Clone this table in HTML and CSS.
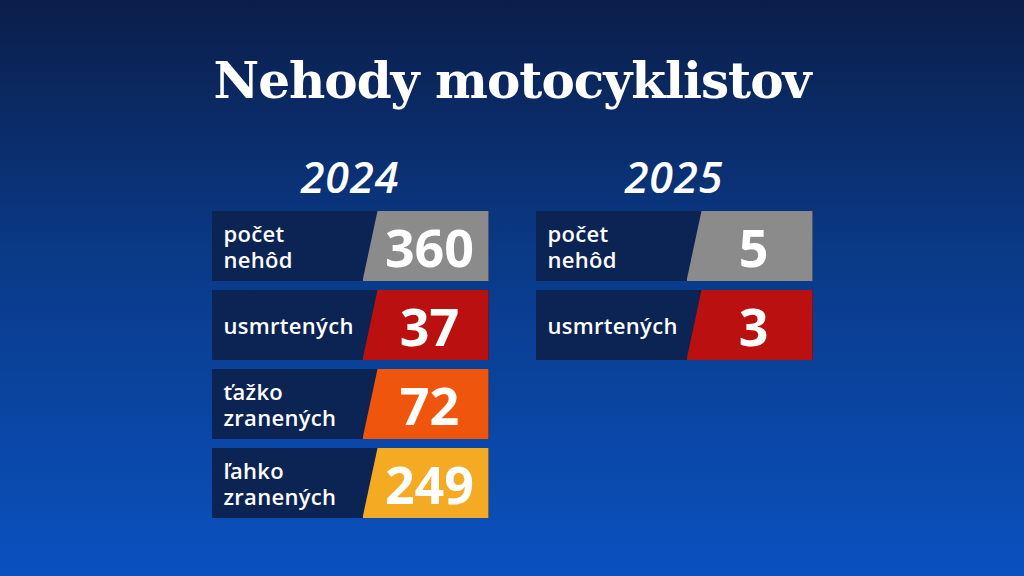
FILE: index.html
```html
<!DOCTYPE html>
<html lang="sk">
<head>
<meta charset="utf-8">
<title>Nehody motocyklistov</title>
<link rel="stylesheet" href="styles.css">
</head>
<body>
<main class="screen">
  <h1 class="title">Nehody motocyklistov</h1>
  <div class="columns">
    <section class="col">
      <h2 class="year">2024</h2>
      <div class="row">
        <div class="label">počet<br>nehôd</div>
        <div class="value gray">360</div>
      </div>
      <div class="row">
        <div class="label">usmrtených</div>
        <div class="value red">37</div>
      </div>
      <div class="row">
        <div class="label">ťažko<br>zranených</div>
        <div class="value orange">72</div>
      </div>
      <div class="row">
        <div class="label">ľahko<br>zranených</div>
        <div class="value yellow">249</div>
      </div>
    </section>
    <section class="col">
      <h2 class="year">2025</h2>
      <div class="row">
        <div class="label">počet<br>nehôd</div>
        <div class="value gray">5</div>
      </div>
      <div class="row">
        <div class="label">usmrtených</div>
        <div class="value red">3</div>
      </div>
    </section>
  </div>
</main>
</body>
</html>
```

FILE: styles.css
```css
html, body {
  margin: 0;
  padding: 0;
}
body {
  width: 1024px;
  height: 576px;
  overflow: hidden;
  background: linear-gradient(180deg, #0b1e4a 0%, #0a3a88 45%, #0a51bf 100%);
  color: #fff;
  font-family: "Open Sans", "Noto Sans", sans-serif;
}
.screen {
  display: flex;
  flex-direction: column;
  align-items: center;
  padding-top: 50px;
}
.title {
  margin: 0;
  font-family: "DejaVu Serif", "Liberation Serif", serif;
  font-weight: 700;
  font-size: 50px;
  line-height: 62px;
  letter-spacing: -1px;
}
.columns {
  display: flex;
  gap: 47px;
  margin-top: 41px;
}
.col {
  width: 277px;
  display: flex;
  flex-direction: column;
  gap: 9px;
}
.year {
  margin: 0 0 1px;
  text-align: center;
  font-style: italic;
  font-weight: 600;
  font-size: 43px;
  line-height: 48px;
  letter-spacing: 1px;
}
.row {
  display: flex;
  height: 70px;
  background: #0c2454;
}
.label {
  flex: 1;
  display: flex;
  align-items: center;
  padding-left: 12px;
  font-size: 22px;
  font-weight: 600;
  line-height: 26px;
  letter-spacing: 0.3px;
}
.value {
  width: 126px;
  display: flex;
  align-items: center;
  justify-content: center;
  padding-left: 8px;
  box-sizing: border-box;
  clip-path: polygon(15px 0, 100% 0, 100% 100%, 0 100%);
  font-size: 52px;
  font-weight: 700;
}
.gray { background: #8b8b8b; }
.red { background: #bb1010; }
.orange { background: #f0550e; }
.yellow { background: #f4aa22; }
```
